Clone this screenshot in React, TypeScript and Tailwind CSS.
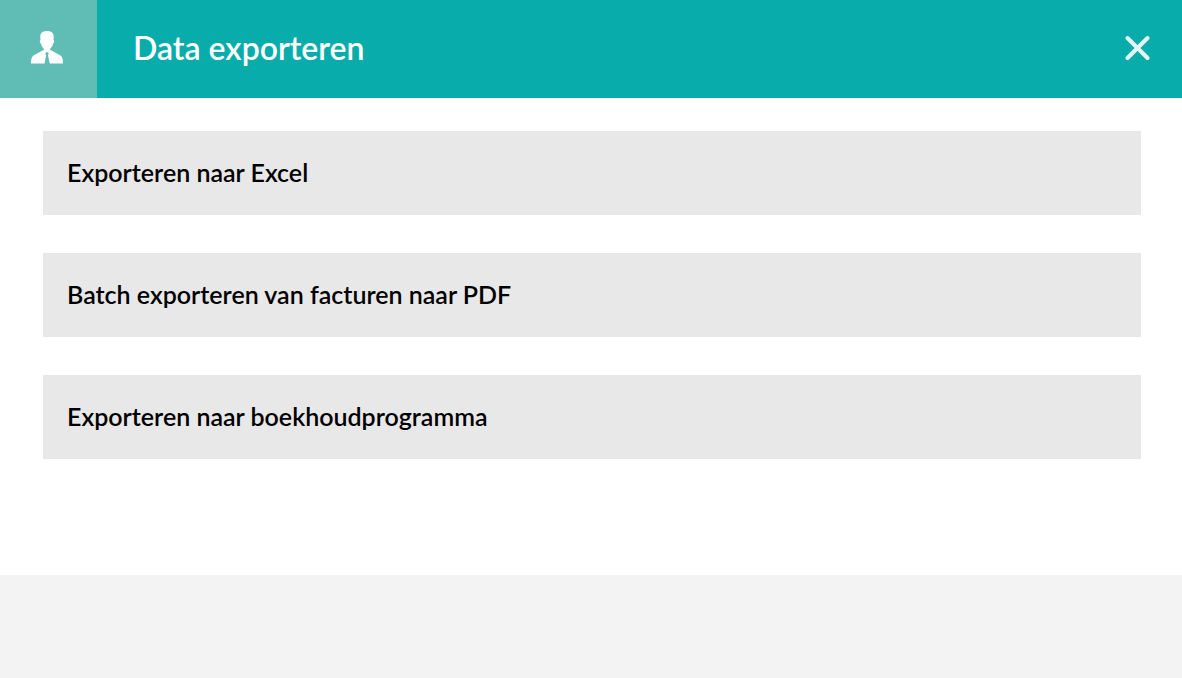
import React from 'react';

const exportOptions = [
  'Exporteren naar Excel',
  'Batch exporteren van facturen naar PDF',
  'Exporteren naar boekhoudprogramma',
];

const PersonIcon: React.FC = () => (
  <svg viewBox="0 0 32 33" className="h-[33px] w-8" fill="white" aria-hidden="true">
    <path d="M16 0c4.5 0 7 2 6.700 6.300L22.500 9c1 .2.900 2.900-.4 3.400-.6 2.300-1.500 4.100-3 5.300V18.700L29.500 24.600c1.900 1.200 2.500 4.300 2.500 8H18.800L16.900 24l1-1.600-1.200-1.200h-1.400l-1.200 1.200 1 1.600-1.500 8.600H0c0-3.700.600-6.800 2.500-8L12.900 18.700V17.700c-1.500-1.200-2.400-3-3-5.300C8.600 11.900 8.500 9.200 9.500 9L9.300 6.300C9 2 11.500 0 16 0Z" />
  </svg>
);

const CloseIcon: React.FC = () => (
  <svg viewBox="0 0 26 26" className="size-[26px]" fill="none" stroke="#e6f6f5" strokeWidth="4" strokeLinecap="round" aria-hidden="true">
    <path d="M3.500 3l20 20M23.500 3l-20 20" />
  </svg>
);

const App: React.FC = () => {
  return (
    <div className="min-h-screen bg-[#f3f3f3] font-['Lato',sans-serif]">
      <header className="flex h-[98px] items-stretch bg-[#08adab]">
        <div className="flex w-[97px] items-center justify-center bg-[#60bdb5] pr-[3px] pb-[3px]">
          <PersonIcon />
        </div>
        <h1 className="flex flex-1 items-center pb-[2px] pl-9 text-[32px] font-semibold text-white">Data exporteren</h1>
        <button type="button" aria-label="Sluiten" className="mr-5 flex items-center px-3 pb-[2px]">
          <CloseIcon />
        </button>
      </header>
      <main className="flex flex-col gap-[38px] bg-white pt-[33px] pr-[41px] pb-[116px] pl-[43px]">
        {exportOptions.map((option) => (
          <button
            key={option}
            type="button"
            className="h-[84px] w-full bg-[#e8e8e8] px-6 text-left text-[25px] font-semibold text-black"
          >
            {option}
          </button>
        ))}
      </main>
    </div>
  );
};

export default App;
